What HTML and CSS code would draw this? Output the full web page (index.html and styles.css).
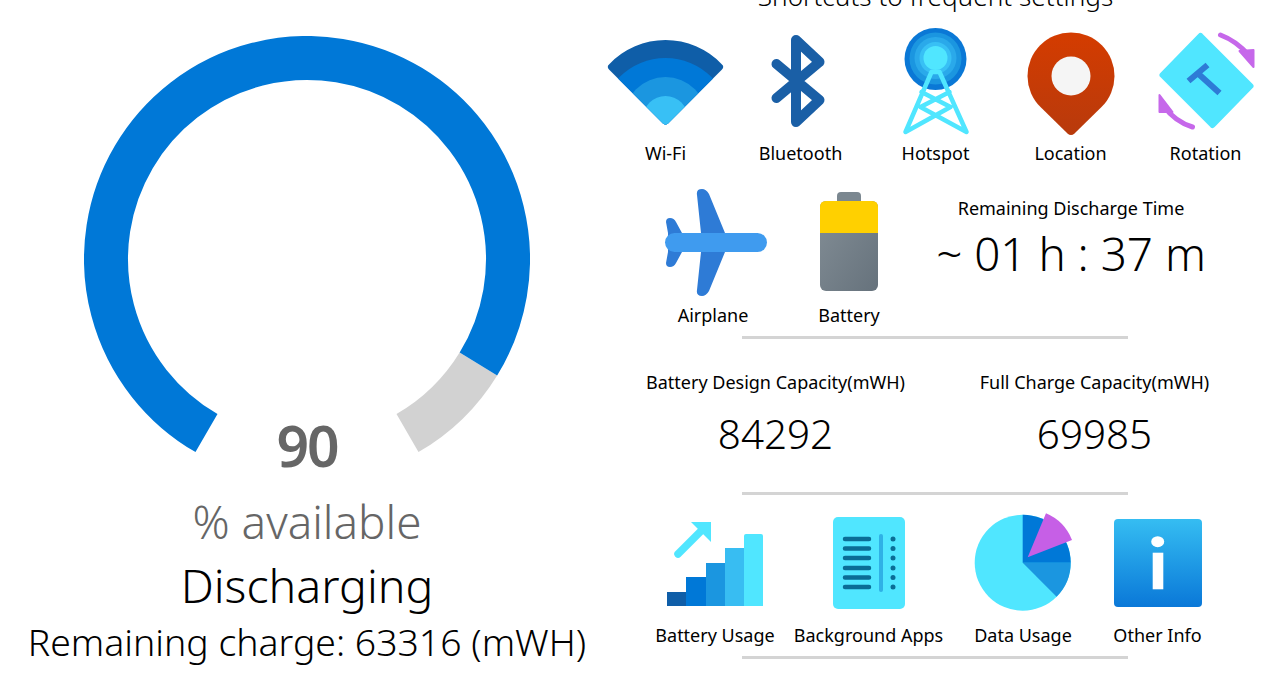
FILE: index.html
```html
<!DOCTYPE html>
<html>
<head>
  <title>Battery Status</title>
  <link rel="stylesheet" href="styles.css">
</head>
<body>

<div class="left">
  <div class="gauge">
    <svg viewBox="0 0 446 446">
      <path class="gauge-rest" d="M394.4 328 A201 201 0 0 1 323.5 397.07"/>
      <path class="gauge-value" d="M122.5 397.07 A201 201 0 1 1 394.4 328"/>
    </svg>
    <div class="percent">90</div>
  </div>
  <div class="available">% available</div>
  <div class="state">Discharging</div>
  <div class="remaining">Remaining charge: 63316 (mWH)</div>
</div>

<div class="right">
  <h2>Shortcuts to frequent settings</h2>

  <div class="shortcuts">
    <div class="item">
      <svg class="icon" viewBox="597.5 28 135 110">
        <defs>
          <clipPath id="fan">
            <path d="M662.5 123.5 L608.5 69.5 Q605.5 66.5 609 64 A77.300 77.300 0 0 1 721 64 Q724.500 66.500 721.500 69.500 L667.500 123.500 Q665 125.500 662.500 123.500 Z"/>
          </clipPath>
        </defs>
        <g clip-path="url(#fan)">
          <rect x="600" y="30" width="130" height="100" fill="#0f5ea8"/>
          <circle cx="665" cy="123" r="65" fill="#0078d7"/>
          <circle cx="665" cy="118.600" r="41.600" fill="#1b96e0"/>
          <circle cx="665" cy="118.500" r="22.500" fill="#38c0f5"/>
        </g>
      </svg>
      <span>Wi-Fi</span>
    </div>
    <div class="item">
      <svg class="icon" viewBox="732.5 28 135 110">
        <path fill="none" stroke="#1a5fa6" stroke-width="10" stroke-linecap="round" stroke-linejoin="round" d="M776 64 L819 100 L795.5 122 V40 L819 62 L776 98"/>
      </svg>
      <span>Bluetooth</span>
    </div>
    <div class="item">
      <svg class="icon" viewBox="867.5 28 135 110">
        <circle cx="935" cy="59" r="31" fill="#0a78d6"/>
        <circle cx="935" cy="58.500" r="26" fill="#1b96e0"/>
        <circle cx="935" cy="58" r="21" fill="#2aa9ea"/>
        <circle cx="935" cy="58" r="16" fill="#38c0f5"/>
        <circle cx="935" cy="58" r="12" fill="#50e6ff"/>
        <path fill="none" stroke="#50e6ff" stroke-width="4.500" stroke-linecap="round" stroke-linejoin="round" d="M905 132 L931 72 H939 L966 132 M921 92 L950 107 M949 92 L920 107 M920 107 L966 132 M950 107 L905 132"/>
      </svg>
      <span>Hotspot</span>
    </div>
    <div class="item">
      <svg class="icon" viewBox="1002.5 28 135 110">
        <defs>
          <linearGradient id="pin" x1="0" y1="0" x2="0" y2="1">
            <stop offset="0" stop-color="#d43c00"/>
            <stop offset="1" stop-color="#b83a0c"/>
          </linearGradient>
        </defs>
        <path fill="url(#pin)" d="M1040 107 A43.500 43.500 0 1 1 1101 107 L1074 133.500 Q1070.500 136.500 1067 133.500 Z"/>
        <circle cx="1070.500" cy="76" r="19.500" fill="#f5f5f5"/>
      </svg>
      <span>Location</span>
    </div>
    <div class="item">
      <svg class="icon" viewBox="1137.5 28 135 110">
        <path fill="#50e6ff" stroke="#50e6ff" stroke-width="6" stroke-linejoin="round" d="M1200 36 L1250 86 L1212 125 L1162 75 Z"/>
        <path fill="none" stroke="#2e7bd6" stroke-width="6" d="M1207 65 L1188 81 M1197 73 L1219 93"/>
        <path fill="none" stroke="#c668ea" stroke-width="5" stroke-linecap="round" d="M1220 35 Q1236 41 1248 55 M1163 106 Q1175 122 1192 127"/>
        <path fill="#c668ea" stroke="#c668ea" stroke-width="2" stroke-linejoin="round" d="M1253 50 V67 L1239 51 Z M1159 95 V112 L1172 112 Z"/>
      </svg>
      <span>Rotation</span>
    </div>
  </div>

  <div class="middle">
    <div class="item">
      <svg class="icon-mid" viewBox="645 185 136 113">
        <path fill="#2e7bd6" d="M697 195 Q696 189 702 189 Q706 189 709 194 L725 233 V252 L709 291 Q706 296 702 296 Q696 296 697 290 L701 252 V233 Z"/>
        <path fill="#2e7bd6" d="M666 222 Q666 218 670 218 Q674 218 676 222 L682 233 V252 L676 263 Q674 267 670 267 Q666 267 666 263 L668 252 V233 Z"/>
        <rect x="665" y="233" width="102" height="19" rx="9.500" fill="#3f9bef"/>
      </svg>
      <span>Airplane</span>
    </div>
    <div class="item">
      <svg class="icon-mid" viewBox="781 185 136 113">
        <defs>
          <linearGradient id="cell" x1="0" y1="0" x2="1" y2="1">
            <stop offset="0" stop-color="#838e96"/>
            <stop offset="1" stop-color="#66727c"/>
          </linearGradient>
        </defs>
        <path fill="#7b8790" d="M837 203 V196 Q837 192 841 192 H857 Q861 192 861 196 V203 Z"/>
        <rect x="820" y="201" width="58" height="90" rx="6" fill="url(#cell)"/>
        <path fill="#ffd000" d="M820 233 V207 Q820 201 826 201 H872 Q878 201 878 207 V233 Z"/>
      </svg>
      <span>Battery</span>
    </div>
    <div class="time">
      <div class="caption">Remaining Discharge Time</div>
      <div class="time-value">~ 01 h : 37 m</div>
    </div>
  </div>

  <hr class="first">

  <div class="capacity">
    <div>
      <div class="caption">Battery Design Capacity(mWH)</div>
      <div class="number">84292</div>
    </div>
    <div>
      <div class="caption">Full Charge Capacity(mWH)</div>
      <div class="number">69985</div>
    </div>
  </div>

  <hr class="second">

  <div class="bottom">
    <div class="item">
      <svg class="icon-low" viewBox="640 510 150 105">
        <rect x="667" y="592" width="19" height="14" fill="#0f5ea8"/>
        <rect x="686" y="577" width="20" height="29" fill="#0078d7"/>
        <rect x="706" y="563" width="19" height="43" fill="#1b96e0"/>
        <rect x="725" y="548" width="19" height="58" fill="#38bdf2"/>
        <path fill="#50e6ff" d="M744 536 Q744 534 746 534 H761 Q763 534 763 536 V606 H744 Z"/>
        <path fill="none" stroke="#50e6ff" stroke-width="7.500" stroke-linecap="round" d="M678 554 L703 529"/>
        <path fill="#50e6ff" d="M691 522 H711 V542 Z"/>
      </svg>
      <span>Battery Usage</span>
    </div>
    <div class="item">
      <svg class="icon-low" viewBox="790 510 157 105">
        <rect x="833" y="517" width="72" height="92" rx="5" fill="#50e6ff"/>
        <path fill="none" stroke="#0a6d96" stroke-width="4.500" stroke-linecap="round" d="M845 539 H869 M845 548.500 H869 M845 558 H869 M845 568 H869 M845 577.500 H869 M845 587 H869"/>
        <path fill="none" stroke="#2fb1e6" stroke-width="4" stroke-linecap="round" d="M881 536 V590"/>
        <g fill="#0a6d96">
          <circle cx="893" cy="539" r="2.500"/>
          <circle cx="893" cy="548.500" r="2.500"/>
          <circle cx="893" cy="558" r="2.500"/>
          <circle cx="893" cy="568" r="2.500"/>
          <circle cx="893" cy="577.500" r="2.500"/>
          <circle cx="893" cy="587" r="2.500"/>
        </g>
      </svg>
      <span>Background Apps</span>
    </div>
    <div class="item">
      <svg class="icon-low" viewBox="947 510 152 105">
        <circle cx="1022.700" cy="562.700" r="48" fill="#50e6ff"/>
        <path fill="#1b96e0" d="M1022.700 562.700 H1070.700 A48 48 0 0 1 1056.600 596.700 Z"/>
        <path fill="#0078d7" d="M1022.700 562.700 V514.700 A48 48 0 0 1 1070.700 562.700 Z"/>
        <path fill="#c65fe6" d="M1027.700 557.300 L1046 513.300 A48 48 0 0 1 1072 540 Z"/>
      </svg>
      <span>Data Usage</span>
    </div>
    <div class="item">
      <svg class="icon-low" viewBox="1099 510 117 105">
        <defs>
          <linearGradient id="info" x1="0" y1="0" x2="0" y2="1">
            <stop offset="0" stop-color="#35bdf2"/>
            <stop offset="1" stop-color="#0a78d8"/>
          </linearGradient>
        </defs>
        <rect x="1114" y="519" width="88" height="88" rx="4" fill="url(#info)"/>
        <ellipse cx="1157.700" cy="541.700" rx="6.500" ry="5.500" fill="#fff"/>
        <rect x="1152.700" y="552.700" width="10.600" height="36.600" fill="#fff"/>
      </svg>
      <span>Other Info</span>
    </div>
  </div>

  <hr class="third">
</div>

</body>
</html>
```

FILE: styles.css
```css
body {
  margin: 0;
  height: 698px;
  overflow: hidden;
  background-color: white;
  color: black;
  font-family: "Noto Sans", "Open Sans", sans-serif;
  display: flex;
}

.left {
  box-sizing: border-box;
  width: 598px;
  padding: 36px 0 0 16px;
  display: flex;
  flex-direction: column;
  align-items: center;
  text-align: center;
  flex-shrink: 0;
}

.gauge {
  position: relative;
  width: 446px;
  height: 446px;
}

.gauge svg {
  display: block;
  width: 446px;
  height: 446px;
}

.gauge path {
  fill: none;
  stroke-width: 44;
}

.gauge-value {
  stroke: #0078d7;
}

.gauge-rest {
  stroke: #d2d2d2;
}

.percent {
  position: absolute;
  left: 0;
  right: 0;
  top: 374px;
  font-size: 57px;
  letter-spacing: -2px;
  line-height: 70px;
  font-weight: 600;
  color: #666;
}

.available {
  margin-top: 9px;
  font-size: 45.800px;
  font-weight: 300;
  line-height: 60px;
  color: #666;
}

.state {
  margin-top: 4px;
  font-size: 46.500px;
  font-weight: 300;
  line-height: 60px;
}

.remaining {
  margin-top: 2px;
  font-size: 37.400px;
  font-weight: 300;
  line-height: 50px;
  white-space: nowrap;
}

.right {
  width: 675px;
  flex-shrink: 0;
}

h2 {
  margin: -21px 0 15px 0;
  font-size: 26.200px;
  line-height: 34px;
  font-weight: 300;
  text-align: center;
}

.item {
  display: flex;
  flex-direction: column;
  align-items: center;
}

.item span {
  font-size: 18px;
  line-height: 26px;
  white-space: nowrap;
}

.icon, .icon-mid, .icon-low {
  display: block;
  width: 100%;
}

.icon {
  height: 110px;
  margin-bottom: 2px;
}

.icon-mid {
  height: 113px;
  margin-bottom: 4px;
}

.icon-low {
  height: 105px;
  margin-bottom: 7px;
}

.shortcuts {
  display: grid;
  grid-template-columns: repeat(5, 135px);
}

.middle {
  display: grid;
  grid-template-columns: 136px 136px 308px;
  margin-top: 19px;
  padding-left: 47px;
}

.time {
  text-align: center;
  padding-top: 10px;
}

.caption {
  font-size: 18px;
  line-height: 26px;
  white-space: nowrap;
}

.time-value {
  font-size: 45.800px;
  font-weight: 300;
  line-height: 60px;
  margin-top: 2px;
  white-space: nowrap;
}

hr {
  width: 386px;
  height: 3px;
  border: none;
  background-color: #d4d4d4;
  margin: 0 0 0 144px;
}

hr.first {
  margin-top: 8px;
}

.capacity {
  display: grid;
  grid-template-columns: 319px 319px;
  padding-left: 18px;
  margin-top: 30px;
  text-align: center;
}

.number {
  font-size: 40.400px;
  font-weight: 300;
  line-height: 56px;
  margin-top: 11px;
}

hr.second {
  margin-top: 30px;
}

.bottom {
  display: grid;
  grid-template-columns: 150px 157px 152px 117px;
  padding-left: 42px;
  margin-top: 15px;
}

hr.third {
  margin-top: 8px;
}
```
